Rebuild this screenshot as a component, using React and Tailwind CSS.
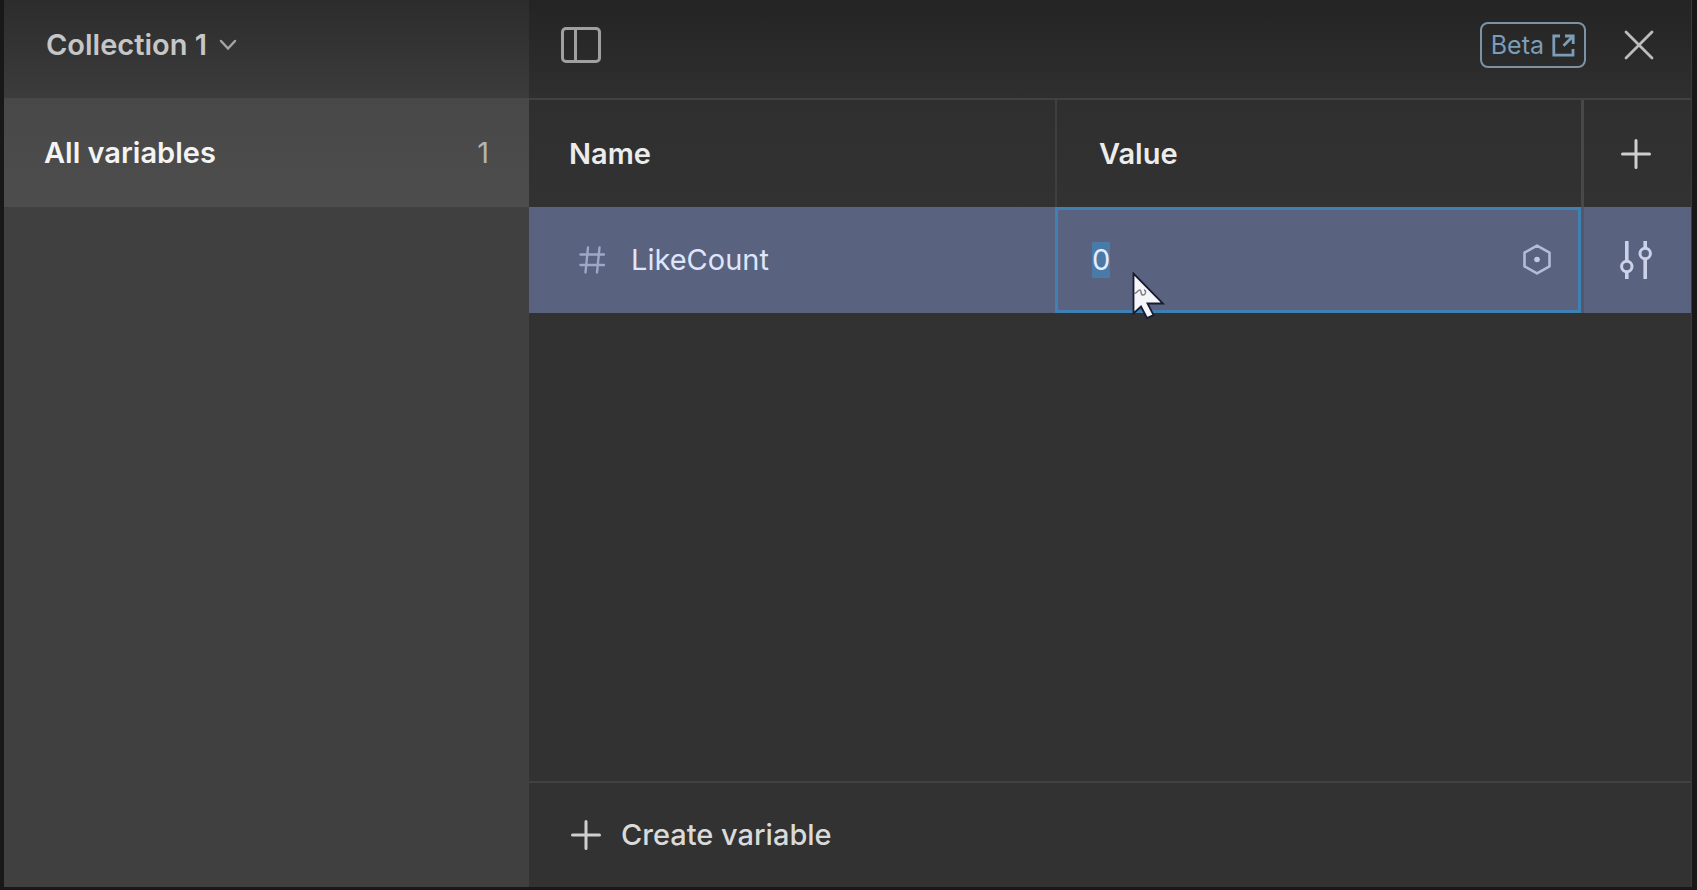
import React, { useEffect, useRef } from "react";

function PlusIcon() {
  return (
    <svg width="30" height="30" viewBox="0 0 30 30" fill="none" stroke="#cfcfcf" strokeWidth="3" strokeLinecap="round" aria-hidden="true">
      <path d="M15 1.5v27M1.5 15h27" />
    </svg>
  );
}

function ChevronIcon() {
  return (
    <svg width="18" height="12" viewBox="0 0 18 12" fill="none" stroke="#a4a4a4" strokeWidth="2.5" strokeLinecap="round" aria-hidden="true">
      <path d="M2 2l7 7.5L16 2" />
    </svg>
  );
}

function PanelIcon() {
  return (
    <svg width="40" height="36" viewBox="0 0 40 36" fill="none" stroke="#a0a0a0" aria-hidden="true">
      <rect x="1.5" y="1.5" width="37" height="33" rx="3.5" strokeWidth="3" />
      <path d="M14.5 2v32" strokeWidth="3" />
    </svg>
  );
}

function ExternalIcon() {
  return (
    <svg width="23" height="23" viewBox="0 0 23 23" fill="none" stroke="#7c9db8" strokeWidth="2.8" aria-hidden="true">
      <path d="M8 2H1.8v19.2H21V15" />
      <path d="M13 2h8.2v8M21 2.2L11.5 11.7" />
    </svg>
  );
}

function CloseIcon() {
  return (
    <svg width="30" height="30" viewBox="0 0 30 30" fill="none" stroke="#bdbdbd" strokeWidth="2.8" strokeLinecap="round" aria-hidden="true">
      <path d="M2 2l26 26M28 2L2 28" />
    </svg>
  );
}

function NumberIcon() {
  return (
    <svg width="26" height="28" viewBox="0 0 26 28" fill="none" stroke="#9fa8c8" strokeWidth="2.4" strokeLinecap="round" aria-hidden="true">
      <path d="M1.5 8.5h23.500M1.5 19h23.500M9 1.500L6.500 26.500M20.500 1.500L18 26.500" />
    </svg>
  );
}

function HexagonIcon() {
  return (
    <svg width="28" height="31" viewBox="0 0 28 31" fill="none" stroke="#b6bcd8" strokeWidth="2.600" strokeLinejoin="round" aria-hidden="true">
      <path d="M14 1.600l12.500 7v13.800l-12.500 7-12.500-7V8.600z" />
      <circle cx="14" cy="15.500" r="2.800" fill="#c3c9e4" stroke="none" />
    </svg>
  );
}

function SlidersIcon() {
  return (
    <svg width="32" height="38" viewBox="0 0 32 38" fill="none" stroke="#ccd1ea" strokeWidth="3.600" aria-hidden="true">
      <path d="M6.800 0v20M6.800 31v7M25.200 0v7M25.200 18v20" />
      <circle cx="6.800" cy="25.500" r="5.200" strokeWidth="3" />
      <circle cx="25.200" cy="12.500" r="5.200" strokeWidth="3" />
    </svg>
  );
}

function Pointer() {
  return (
    <svg className="pointer-events-none absolute top-[65px] left-[77px] z-10" width="34" height="47" viewBox="0 0 34 47" aria-hidden="true">
      <path d="M1.500 1.500V41.500l7.500-7 6 11.500 6.500-3-6-11.500H31z" fill="#f6f6fa" stroke="#171c33" strokeWidth="1.800" />
      <path d="M2 21.500c3 0 4-4 6-3.500s0 5 3 5 3.500-5 1-5" fill="none" stroke="#7d7d86" strokeWidth="1.500" />
    </svg>
  );
}

export default function App() {
  const valueRef = useRef(null);

  useEffect(() => {
    valueRef.current.focus();
    valueRef.current.select();
  }, []);

  return (
    <div className="flex min-h-screen bg-[#181818] pr-[5px] pb-[3px] pl-1 font-['Inter',sans-serif] text-[29px] leading-[36px]">
      <aside className="flex w-[525px] shrink-0 flex-col bg-[#404040]">
        <div className="flex h-[98px] items-center bg-linear-to-b from-[#2c2c2c] to-[#3c3c3c] pb-2 pl-[42px]">
          <button type="button" className="flex items-center gap-3 font-semibold text-[#c6c6c6]">
            Collection 1
            <ChevronIcon />
          </button>
        </div>
        <button type="button" className="flex h-[109px] items-center justify-between bg-linear-to-b from-[#484848] to-[#4d4d4d] pr-10 pl-10 text-left">
          <span className="font-semibold text-[#f4f4f4]">All variables</span>
          <span className="text-[#b4b4b4]">1</span>
        </button>
      </aside>

      <main className="flex min-w-0 flex-1 flex-col border-r border-[#3a3a3a] bg-[#323232]">
        <header className="flex h-[100px] items-center justify-between border-b-2 border-[#414141] bg-linear-to-b from-[#242424] to-[#2f2f2f] pr-[37px] pb-2 pl-8">
          <button type="button" aria-label="Toggle sidebar">
            <PanelIcon />
          </button>
          <div className="flex items-center gap-[38px]">
            <a href="#beta" className="flex h-[46px] items-center gap-2 rounded-lg border-2 border-[#7c93a6] px-[9px] text-[25px] text-[#7c9db8]">
              Beta
              <ExternalIcon />
            </a>
            <button type="button" aria-label="Close">
              <CloseIcon />
            </button>
          </div>
        </header>

        <table className="w-full table-fixed border-separate border-spacing-0">
          <colgroup>
            <col />
            <col />
            <col className="w-[110px]" />
          </colgroup>
          <thead>
            <tr className="h-[107px] bg-linear-to-b from-[#2f2f2f] to-[#323232] text-left text-[#ececec]">
              <th scope="col" className="p-0 pl-10 font-semibold">Name</th>
              <th scope="col" className="border-l-2 border-[#3f3f3f] p-0 pl-[42px] font-semibold">Value</th>
              <th scope="col" className="border-l-3 border-[#484848] p-0 pr-1">
                <button type="button" aria-label="Add mode" className="mx-auto block">
                  <PlusIcon />
                </button>
              </th>
            </tr>
          </thead>
          <tbody>
            <tr className="h-[106px] bg-[#59627f] text-[#dfe5fb]">
              <td className="p-0 pl-[50px]">
                <div className="flex items-center gap-[26px]">
                  <NumberIcon />
                  LikeCount
                </div>
              </td>
              <td className="relative p-0">
                <div className="flex h-[106px] items-center border-3 border-[#3f80b5] pr-[27px] pb-px pl-[34px]">
                  <input
                    ref={valueRef}
                    type="text"
                    defaultValue="0"
                    aria-label="LikeCount value"
                    className="h-9 min-w-0 flex-1 bg-transparent caret-transparent outline-none selection:bg-[#4a7aa8] selection:text-[#e6ecff]"
                  />
                  <button type="button" aria-label="Bind variable">
                    <HexagonIcon />
                  </button>
                </div>
                <Pointer />
              </td>
              <td className="border-l-3 border-[#515868] p-0 pr-1">
                <button type="button" aria-label="Edit variable" className="mx-auto block">
                  <SlidersIcon />
                </button>
              </td>
            </tr>
          </tbody>
        </table>

        <footer className="mt-auto flex h-[106px] items-center border-t-2 border-[#414141] pl-[42px]">
          <button type="button" className="flex items-center gap-5 font-medium text-[#dadada]">
            <PlusIcon />
            Create variable
          </button>
        </footer>
      </main>
    </div>
  );
}
